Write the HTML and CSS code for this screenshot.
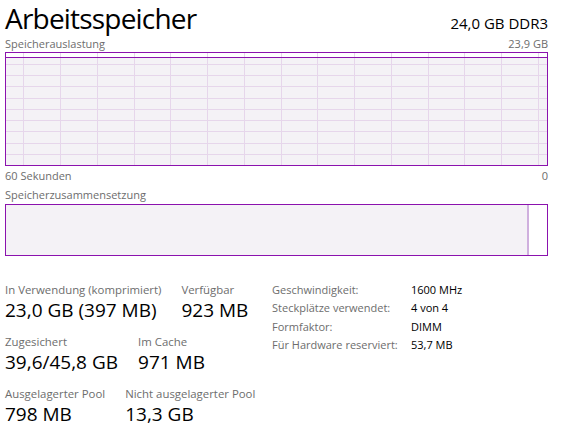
FILE: index.html
```html
<!DOCTYPE html>
<html lang="de">
<head>
<meta charset="utf-8">
<title>Arbeitsspeicher</title>
<link rel="stylesheet" href="styles.css">
</head>
<body>
<div class="page">
  <header class="title-row">
    <h1 class="title">Arbeitsspeicher</h1>
    <span class="spec">24,0 GB DDR3</span>
  </header>
  <div class="axis-row axis-top">
    <span>Speicherauslastung</span>
    <span>23,9 GB</span>
  </div>
  <div class="graph">
    <svg class="graph-svg" width="541" height="112" viewBox="0 0 541 112">
      <rect x="0" y="4" width="541" height="108" fill="#f4f2f6"/>
      <g stroke="#e6d6eb" stroke-width="1" shape-rendering="crispEdges">
        <line x1="17.5" y1="0" x2="17.5" y2="112"/>
        <line x1="54.5" y1="0" x2="54.5" y2="112"/>
        <line x1="91.5" y1="0" x2="91.5" y2="112"/>
        <line x1="128.5" y1="0" x2="128.5" y2="112"/>
        <line x1="164.5" y1="0" x2="164.5" y2="112"/>
        <line x1="201.5" y1="0" x2="201.5" y2="112"/>
        <line x1="238.5" y1="0" x2="238.5" y2="112"/>
        <line x1="275.5" y1="0" x2="275.5" y2="112"/>
        <line x1="311.5" y1="0" x2="311.5" y2="112"/>
        <line x1="348.5" y1="0" x2="348.5" y2="112"/>
        <line x1="385.5" y1="0" x2="385.5" y2="112"/>
        <line x1="422.5" y1="0" x2="422.5" y2="112"/>
        <line x1="458.5" y1="0" x2="458.5" y2="112"/>
        <line x1="495.5" y1="0" x2="495.5" y2="112"/>
        <line x1="532.5" y1="0" x2="532.5" y2="112"/>
        <line x1="0" y1="11.5" x2="541" y2="11.5"/>
        <line x1="0" y1="22.5" x2="541" y2="22.5"/>
        <line x1="0" y1="33.5" x2="541" y2="33.5"/>
        <line x1="0" y1="45.5" x2="541" y2="45.5"/>
        <line x1="0" y1="56.5" x2="541" y2="56.5"/>
        <line x1="0" y1="67.5" x2="541" y2="67.5"/>
        <line x1="0" y1="78.5" x2="541" y2="78.5"/>
        <line x1="0" y1="90.5" x2="541" y2="90.5"/>
        <line x1="0" y1="101.5" x2="541" y2="101.5"/>
      </g>
      <line x1="0" y1="4.5" x2="541" y2="4.5" stroke="#8b12ae" stroke-width="1" shape-rendering="crispEdges"/>
    </svg>
  </div>
  <div class="axis-row axis-bottom">
    <span>60 Sekunden</span>
    <span>0</span>
  </div>
  <div class="section-label">Speicherzusammensetzung</div>
  <div class="composition">
    <div class="comp-used"></div>
    <div class="comp-modified"></div>
    <div class="comp-free"></div>
  </div>
  <div class="stats">
    <div class="stat-grid">
      <div class="stat-row">
        <div class="stat"><div class="stat-label">In Verwendung (komprimiert)</div><div class="stat-value">23,0 GB (397 MB)</div></div>
        <div class="stat"><div class="stat-label">Verfügbar</div><div class="stat-value">923 MB</div></div>
      </div>
      <div class="stat-row">
        <div class="stat"><div class="stat-label">Zugesichert</div><div class="stat-value">39,6/45,8 GB</div></div>
        <div class="stat"><div class="stat-label">Im Cache</div><div class="stat-value">971 MB</div></div>
      </div>
      <div class="stat-row">
        <div class="stat"><div class="stat-label">Ausgelagerter Pool</div><div class="stat-value">798 MB</div></div>
        <div class="stat"><div class="stat-label">Nicht ausgelagerter Pool</div><div class="stat-value">13,3 GB</div></div>
      </div>
    </div>
    <dl class="details">
      <div class="detail-row"><dt>Geschwindigkeit:</dt><dd>1600 MHz</dd></div>
      <div class="detail-row"><dt>Steckplätze verwendet:</dt><dd>4 von 4</dd></div>
      <div class="detail-row"><dt>Formfaktor:</dt><dd>DIMM</dd></div>
      <div class="detail-row"><dt>Für Hardware reserviert:</dt><dd>53,7 MB</dd></div>
    </dl>
  </div>
</div>
</body>
</html>
```

FILE: styles.css
```css
html, body {
  margin: 0;
  padding: 0;
  background: #ffffff;
}

body {
  font-family: "Open Sans", "Noto Sans", "Liberation Sans", sans-serif;
  color: #000000;
}

.page {
  width: 543px;
  padding: 0 14px 0 5px;
}

.title-row {
  display: flex;
  justify-content: space-between;
  align-items: baseline;
  padding-top: 0;
  height: 36px;
  overflow: visible;
}

.title {
  margin: 0;
  font-size: 28px;
  font-weight: 400;
  line-height: 36px;
  letter-spacing: -0.8px;
  white-space: nowrap;
}

.spec {
  font-size: 15px;
  line-height: 20px;
  white-space: nowrap;
}

.axis-row {
  display: flex;
  justify-content: space-between;
  font-size: 11px;
  color: #6d6d6d;
  line-height: 16px;
}

.axis-top {
  height: 16px;
}

.graph {
  width: 541px;
  height: 112px;
  border: 1px solid #8b12ae;
}

.graph-svg {
  display: block;
}

.axis-bottom {
  margin-top: 2px;
  height: 19px;
}

.section-label {
  font-size: 11px;
  color: #6d6d6d;
  line-height: 16px;
  height: 17px;
}

.composition {
  display: flex;
  width: 541px;
  height: 50px;
  border: 1px solid #8b12ae;
}

.comp-used {
  width: 521px;
  background: #f4f2f6;
}

.comp-modified {
  width: 2px;
  background: #cfb0de;
}

.comp-free {
  flex: 1;
  background: #ffffff;
}

.stats {
  display: flex;
  margin-top: 26px;
}

.stat-grid {
  display: flex;
  flex-direction: column;
  gap: 10px;
  width: 267px;
}

.stat-row {
  display: flex;
  gap: 20px;
}

.stat-label {
  font-size: 11.4px;
  color: #6d6d6d;
  line-height: 15px;
  white-space: nowrap;
}

.stat-value {
  font-size: 19px;
  line-height: 27px;
  white-space: nowrap;
}

.details {
  margin: 0;
  display: flex;
  flex-direction: column;
}

.detail-row {
  display: flex;
  height: 18.4px;
  font-size: 11px;
  line-height: 15px;
}

.detail-row dt {
  width: 139px;
  color: #6d6d6d;
}

.detail-row dd {
  margin: 0;
}
```
